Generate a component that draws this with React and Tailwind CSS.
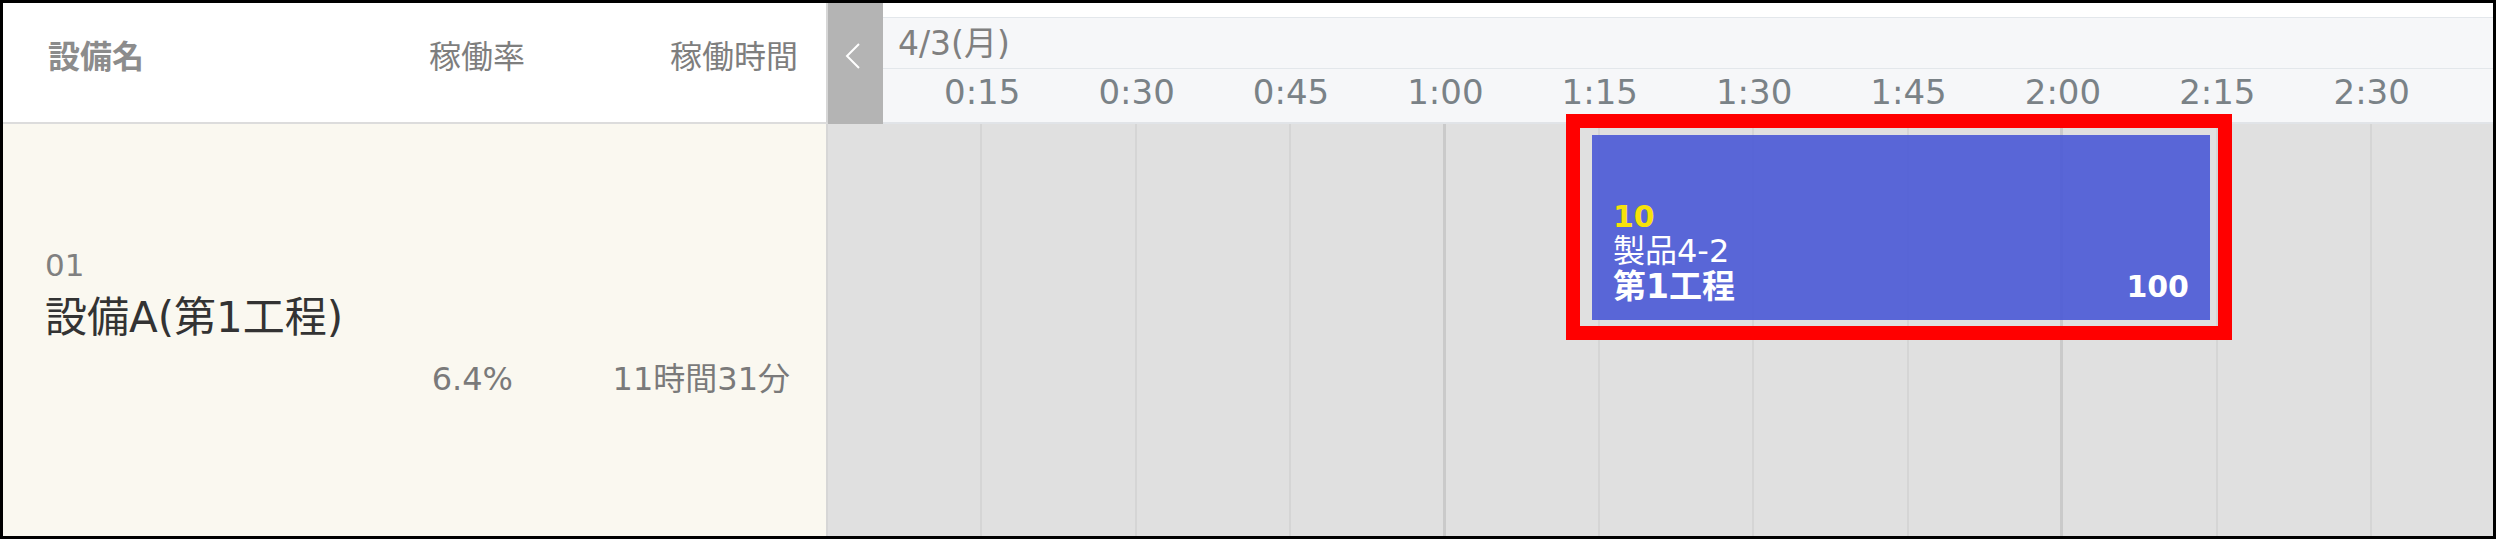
import React from "react";

const times = ["0:15", "0:30", "0:45", "1:00", "1:15", "1:30", "1:45", "2:00", "2:15", "2:30"];
const cells = Array.from({ length: 11 }, (_, i) => i);

const App = () => {
  return (
    <div className="relative w-[2496px] h-[539px] border-[3px] border-black bg-white overflow-hidden flex flex-col font-['DejaVu_Sans','Noto_Sans_CJK_JP',sans-serif]">
      {/* header */}
      <div className="flex h-[121px] shrink-0">
        <div className="w-[825px] shrink-0 flex items-start pt-[38px] pl-[45px] pr-[28px] border-r-2 border-[#d6d6d6] border-b-2 border-b-[#dcdcdc] bg-white">
          <div className="flex-1 text-[32px] leading-none font-bold text-[#8c8c8c]">設備名</div>
          <div className="w-[200px] text-right text-[32px] leading-none text-[#7e7e7e]">稼働率</div>
          <div className="w-[273px] text-right text-[32px] leading-none text-[#7e7e7e]">稼働時間</div>
        </div>
        <div className="flex-1 flex min-w-0">
          <div className="w-[55px] shrink-0 bg-[#b4b4b4] flex items-start justify-center pt-[40px] pr-[6px]">
            <svg width="16" height="26" viewBox="0 0 16 26" fill="none">
              <polyline points="14,1 2,13 14,25" stroke="white" strokeWidth="2" />
            </svg>
          </div>
          <div className="flex-1 flex flex-col min-w-0">
            <div className="h-[15px] bg-white border-b border-[#e3e7eb]" />
            <div className="h-[51px] bg-[#f6f7f9] border-b border-[#e3e7eb] pl-[15px] pt-[9px] text-[33px] leading-none text-[#808080]">
              4/3(月)
            </div>
            <div className="flex-1 bg-[#f6f7f9] border-b-2 border-[#e1e4e8] flex pl-[22px] pt-[6px] overflow-hidden">
              {times.map((t) => (
                <div key={t} className="w-[154.4px] shrink-0 text-center text-[34px] leading-none text-[#7a8287]">
                  {t}
                </div>
              ))}
            </div>
          </div>
        </div>
      </div>

      {/* body */}
      <div className="flex flex-1 min-h-0">
        <div className="w-[825px] shrink-0 bg-[#faf8f0] border-r-2 border-[#d6d6d6] pl-[42px] pt-[126px] pr-[36px]">
          <div className="text-[31px] leading-none text-[#808080]">01</div>
          <div className="mt-[16px] text-[42px] leading-none text-[#333333]">設備A(第1工程)</div>
          <div className="mt-[24px] flex justify-end text-[32px] leading-none text-[#7a7a7a]">
            <div>6.4%</div>
            <div className="w-[277px] text-right">11時間31分</div>
          </div>
        </div>
        <div className="relative flex-1 min-w-0 bg-[#e0e0e0] flex overflow-hidden">
          {cells.map((i) => (
            <div
              key={i}
              className={
                i === 3 || i === 7
                  ? "w-[154.4px] shrink-0 border-r-[3px] border-[#cacaca]"
                  : "w-[154.4px] shrink-0 border-r-2 border-[#d5d5d5]"
              }
            />
          ))}
          <div className="absolute left-[764px] top-[11px] w-[618px] h-[185px] bg-[rgba(79,92,214,0.93)] flex flex-col justify-end px-[21px] pb-[16px] text-white">
            <div className="text-[30px] leading-[34px] font-bold text-[#f6e20a]">10</div>
            <div className="text-[32px] leading-[35px]">製品4-2</div>
            <div className="flex justify-between items-end">
              <div className="text-[33px] leading-[35px] font-bold">第1工程</div>
              <div className="text-[30px] leading-[34px] font-bold">100</div>
            </div>
          </div>
        </div>
      </div>

      {/* highlight */}
      <div className="absolute left-[1563px] top-[111px] w-[666px] h-[226px] border-[14px] border-[#ff0000]" />
    </div>
  );
};

export default App;
